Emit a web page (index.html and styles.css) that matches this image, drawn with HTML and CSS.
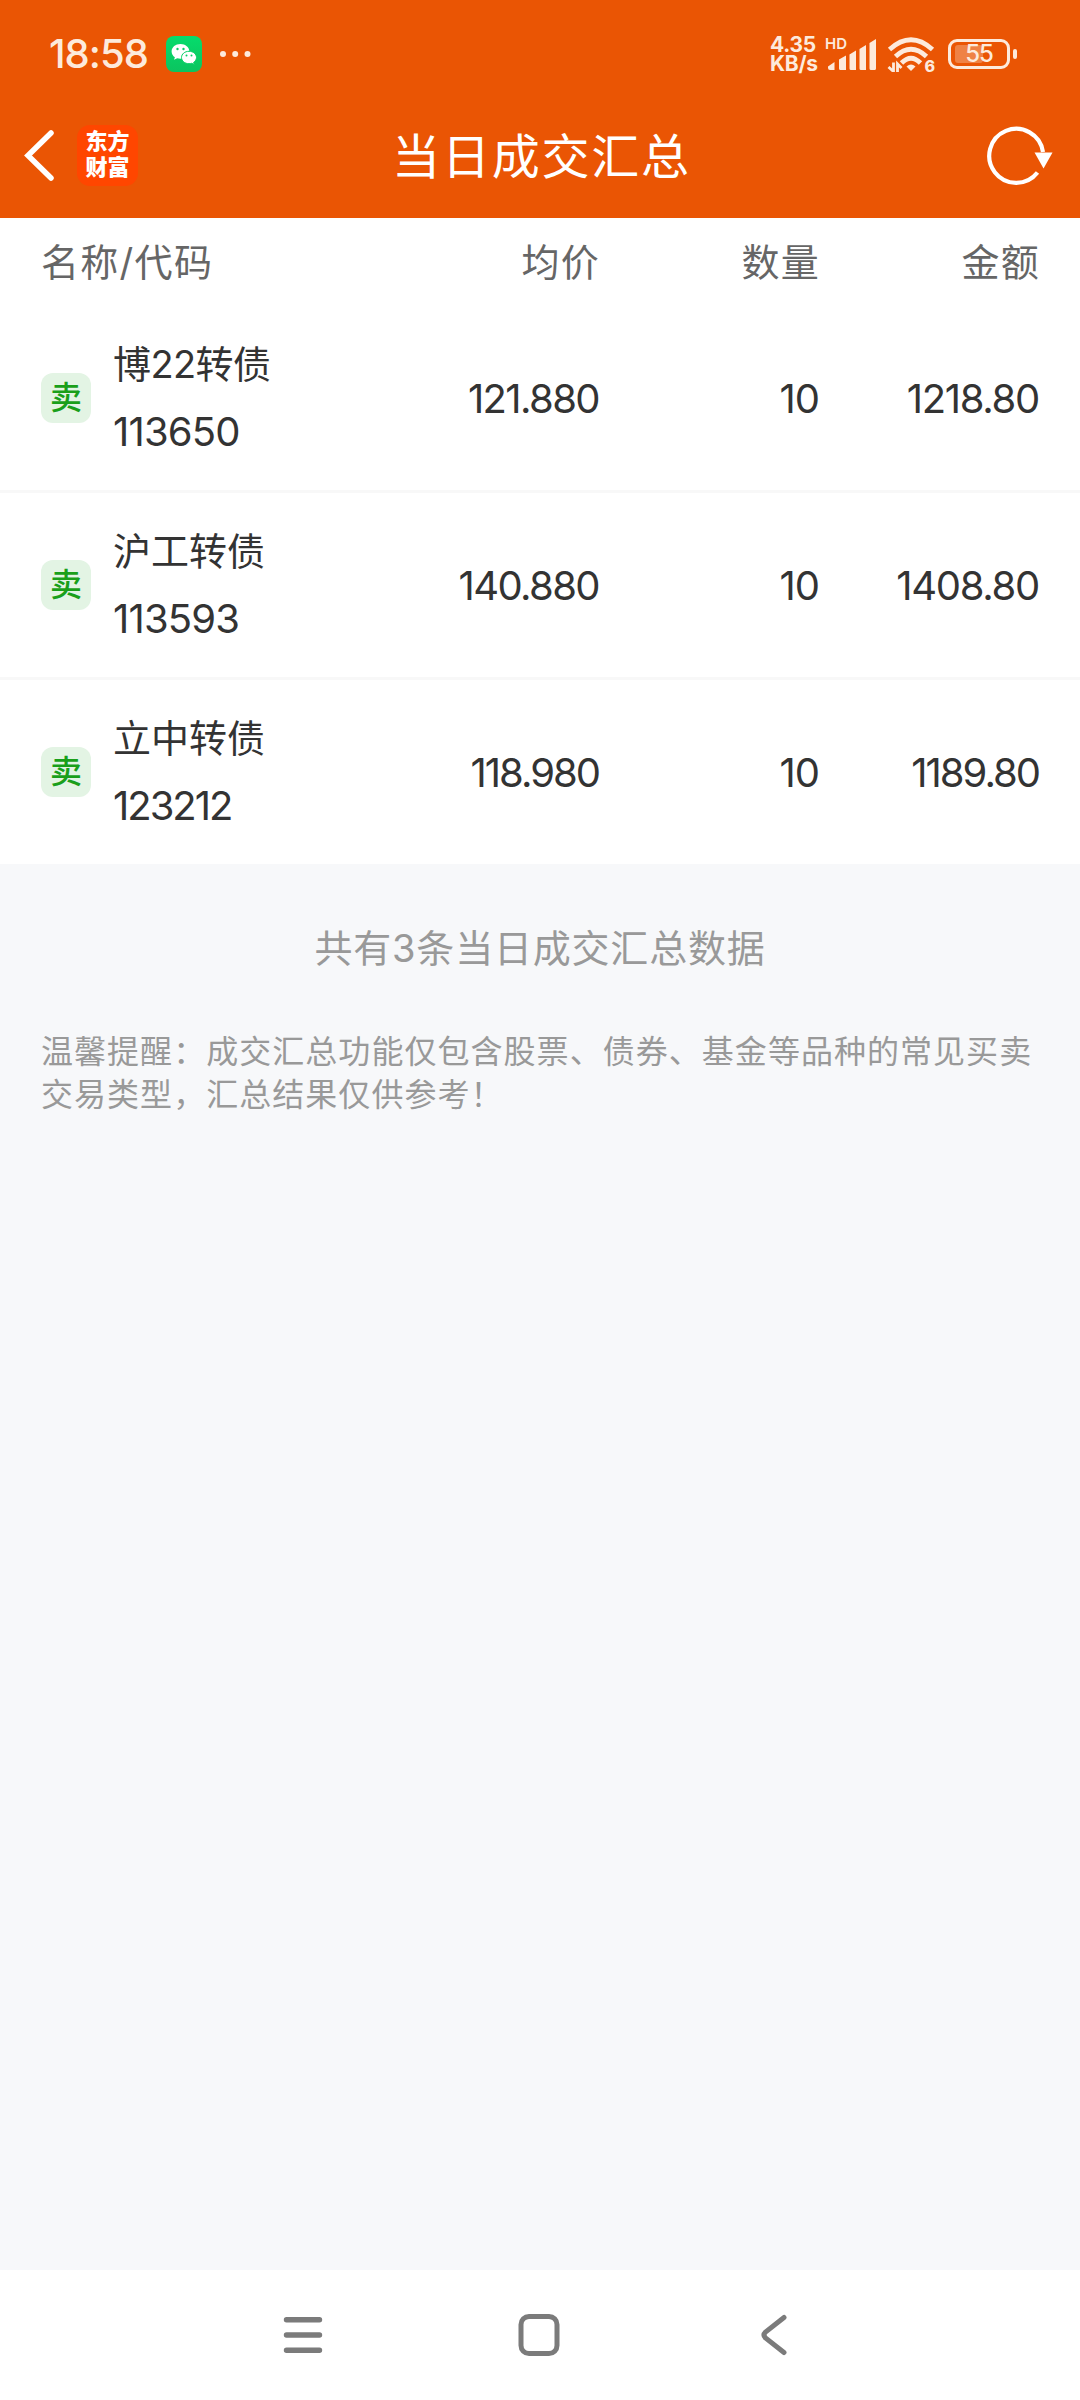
FILE: index.html
```html
<!DOCTYPE html>
<html lang="zh-CN">
<head>
<meta charset="utf-8">
<title>当日成交汇总</title>
<link rel="stylesheet" href="styles.css">
</head>
<body>
<div class="screen">
  <header class="top">
    <div class="status">
      <span class="clock">18:58</span>
      <svg class="wechat" width="36" height="36" viewBox="0 0 36 36">
        <defs><linearGradient id="g" x1="0" y1="0" x2="0" y2="1"><stop offset="0" stop-color="#05dc6c"/><stop offset="1" stop-color="#0bc45f"/></linearGradient></defs>
        <rect width="36" height="36" rx="8" fill="url(#g)"/>
        <path d="M14.500 8C9.500 8 5.600 11.200 5.600 15.400c0 2.400 1.300 4.400 3.300 5.800L8 23.800l3.200-1.600c1 .300 2.100.500 3.300.500 4.900 0 8.900-3.200 8.900-7.300S19.400 8 14.500 8z" fill="#fff"/>
        <path d="M23 15.300c-4.200 0-7.500 2.700-7.500 6.200s3.300 6.200 7.500 6.200c1 0 1.900-.100 2.700-.400l2.600 1.300-.700-2.200c1.700-1.200 2.900-2.900 2.900-4.900 0-3.500-3.300-6.200-7.500-6.200z" fill="#fff" stroke="#08cf65" stroke-width="1"/>
        <g fill="#08cf65"><circle cx="11.500" cy="13" r="1.200"/><circle cx="17.500" cy="13" r="1.200"/><circle cx="20.500" cy="19.500" r="1"/><circle cx="25.500" cy="19.500" r="1"/></g>
      </svg>
      <svg class="dots" width="32" height="8" viewBox="0 0 32 8" fill="#fdeadc"><circle cx="4" cy="4" r="3"/><circle cx="16.200" cy="4" r="3"/><circle cx="28.500" cy="4" r="3"/></svg>
      <div class="speed"><span>4.35</span><span>KB/s</span></div>
      <div class="cell">
        <span class="hd">HD</span>
        <svg width="54" height="36" viewBox="0 0 54 36" fill="#fdeadc">
          <path d="M3 30.500 9.500 26V34H5Q3 34 3 32zM14 23.500 21 19.500V34H15.500Q14 34 14 32.500zM24.500 18.500 31 14.500V34H26Q24.500 34 24.500 32.500zM34.500 13 41 9V34H36Q34.500 34 34.500 32.500zM44.500 7 51 3V32.500Q51 34 49.500 34H46Q44.500 34 44.500 32.500z"/>
        </svg>
      </div>
      <div class="wifi">
        <svg width="50" height="36" viewBox="0 0 50 36">
          <g fill="none" stroke="#fdeadc" stroke-width="4.800">
            <path d="M3.500 13.500Q25-6 46.500 13.500"/><path d="M9.500 20.500Q25 6 40.500 20.500"/><path d="M15.500 27Q25 17.500 34.500 27"/>
          </g>
          <path d="M25 35 20.500 30.500Q25 26.500 29.500 30.500z" fill="#fdeadc"/>
          <path d="M7.500 26.500V35.500L2.500 31M11.500 36V28L15.500 32" fill="none" stroke="#fdeadc" stroke-width="2.800"/>
        </svg>
        <span class="six">6</span>
      </div>
      <div class="battery">
        <svg width="72" height="32" viewBox="0 0 72 32">
          <rect x="2.500" y="2.500" width="59" height="27" rx="7.500" fill="none" stroke="#fdeadc" stroke-width="3"/>
          <rect x="8" y="7" width="28" height="18" rx="3" fill="#ef8245"/>
          <rect x="66" y="11" width="4" height="10" rx="2" fill="#fdeadc"/>
        </svg>
        <span class="pct">55</span>
      </div>
    </div>
    <div class="navbar">
      <div class="left">
        <svg width="32" height="52" viewBox="0 0 32 52"><path d="M27 4 4 26.500 27 49" fill="none" stroke="#fff" stroke-width="5.500" stroke-linecap="round"/></svg>
        <div class="brand"><span>东方</span><span>财富</span></div>
      </div>
      <h1>当日成交汇总</h1>
      <svg class="reload" width="68" height="62" viewBox="0 0 68 62"><path d="M50.500 48.500A27 27 0 1 1 56 28" fill="none" stroke="#fff" stroke-width="4.200"/><path d="M47.500 28.500h18L56.500 44.500z" fill="#fff"/></svg>
    </div>
  </header>
  <main>
    <section class="table">
      <div class="row head"><span>名称/代码</span><span class="n">均价</span><span class="n">数量</span><span class="n">金额</span></div>
      <div class="row item">
        <div class="bond"><span class="sell">卖</span><div class="id"><span class="name mixed">博22转债</span><span class="code">113650</span></div></div>
        <span class="n price">121.880</span><span class="n">10</span><span class="n sum">1218.80</span>
      </div>
      <div class="row item">
        <div class="bond"><span class="sell">卖</span><div class="id"><span class="name">沪工转债</span><span class="code">113593</span></div></div>
        <span class="n price">140.880</span><span class="n">10</span><span class="n sum">1408.80</span>
      </div>
      <div class="row item narrow">
        <div class="bond"><span class="sell">卖</span><div class="id"><span class="name">立中转债</span><span class="code">123212</span></div></div>
        <span class="n price">118.980</span><span class="n">10</span><span class="n sum">1189.80</span>
      </div>
    </section>
    <p class="total">共有3条当日成交汇总数据</p>
    <p class="tip">温馨提醒：成交汇总功能仅包含股票、债券、基金等品种的常见买卖<br>交易类型，汇总结果仅供参考！</p>
  </main>
  <nav class="keys">
    <svg width="42" height="44" viewBox="0 0 42 44" stroke="#7b7b7b" stroke-width="5.400" stroke-linecap="round"><path d="M4.500 6.700h33M4.500 22h33M4.500 37.300h33"/></svg>
    <svg class="home" width="44" height="44" viewBox="0 0 44 44"><rect x="4" y="3.500" width="36" height="37" rx="8" fill="none" stroke="#7b7b7b" stroke-width="5"/></svg>
    <svg width="32" height="44" viewBox="0 0 32 44"><path d="M27 4.500 8.500 19Q5.500 22 8.500 25L27 39.500" fill="none" stroke="#7b7b7b" stroke-width="5" stroke-linecap="round"/></svg>
  </nav>
</div>
</body>
</html>
```

FILE: styles.css
```css
* { box-sizing: border-box; }
body { margin: 0; font-family: Inter, "Noto Sans CJK SC", sans-serif; }
svg { display: block; flex: none; }
.screen { width: 1080px; height: 2400px; display: flex; flex-direction: column; background: #f7f8fa; }

.top { height: 218px; background: #ea5504; color: #fff; }
.status { height: 94px; padding: 14px 61px 0 49px; display: flex; align-items: center; color: #fdeadc; }
.clock { width: 117px; font-size: 40px; font-weight: 500; line-height: 40px; letter-spacing: -1px; white-space: nowrap; }
.dots { margin-left: 17px; }
.speed { margin-left: auto; width: 55px; display: flex; flex-direction: column; font-size: 21px; font-weight: 700; line-height: 19px; letter-spacing: -0.300px; white-space: nowrap; }
.cell, .wifi, .battery { position: relative; }
.hd { position: absolute; left: 0; top: -3px; font-size: 15px; line-height: 22px; font-weight: 600; }
.wifi { margin-left: 7px; }
.six { position: absolute; right: 1px; bottom: -5px; font-size: 16px; line-height: 22px; font-weight: 800; }
.battery { margin-left: 11px; }
.pct { position: absolute; left: 0; top: 0; width: 64px; text-align: center; font-size: 24px; line-height: 32px; font-weight: 500; letter-spacing: -1px; }

.navbar { height: 124px; padding: 0 25px 2px 24px; display: grid; grid-template-columns: 200px 1fr 200px; align-items: center; }
.left { display: flex; align-items: center; gap: 21px; }
.brand { width: 61px; height: 61px; border-radius: 13px; background: #ff4600; display: flex; flex-direction: column; justify-content: center; align-items: center; padding-bottom: 2px; font-size: 22px; font-weight: 900; line-height: 26px; }
.navbar h1 { margin: 0; padding: 0 0 5px 4px; font-size: 48px; font-weight: 400; letter-spacing: 1.800px; text-align: center; white-space: nowrap; }
.reload { justify-self: end; }

.table { background: #fff; }
.row { display: grid; grid-template-columns: 378px 180px 220px 220px; padding: 0 41px; align-items: center; }
.n { text-align: right; }
.head { height: 88px; padding-bottom: 6px; color: #666; font-size: 38px; letter-spacing: 1.300px; }
.head .n { margin-right: -1px; }
.item { height: 187px; border-bottom: 3px solid #f8f8f8; color: #333; font-size: 40px; letter-spacing: -1px; }
.item:last-child { height: 184px; border-bottom: 0; }
.price { letter-spacing: -1.600px; }
.sum { letter-spacing: -1.300px; }
.narrow .price, .narrow .sum, .narrow .code { letter-spacing: -2px; }
.bond { display: flex; align-items: center; gap: 22px; }
.sell { width: 50px; height: 50px; border-radius: 12px; background: #e3f4e4; color: #1a9f1a; font-size: 32px; font-weight: 500; line-height: 50px; text-align: center; letter-spacing: 0; }
.id { display: flex; flex-direction: column; }
.name { font-size: 38px; line-height: 67px; letter-spacing: 0; }
.mixed { letter-spacing: -0.600px; }
.code { line-height: 67px; letter-spacing: -0.800px; }

.total { margin: 56px 0 0; text-align: center; color: #999; font-size: 38px; line-height: 56px; letter-spacing: 0.800px; }
.tip { margin: 54px 0 0 41px; color: #999; font-size: 32px; line-height: 43px; letter-spacing: 1.040px; white-space: nowrap; }

.keys { margin-top: auto; height: 130px; background: #fff; padding: 0 291px 0 282px; display: flex; align-items: center; justify-content: space-between; }
.home { margin-right: 3px; }
```
